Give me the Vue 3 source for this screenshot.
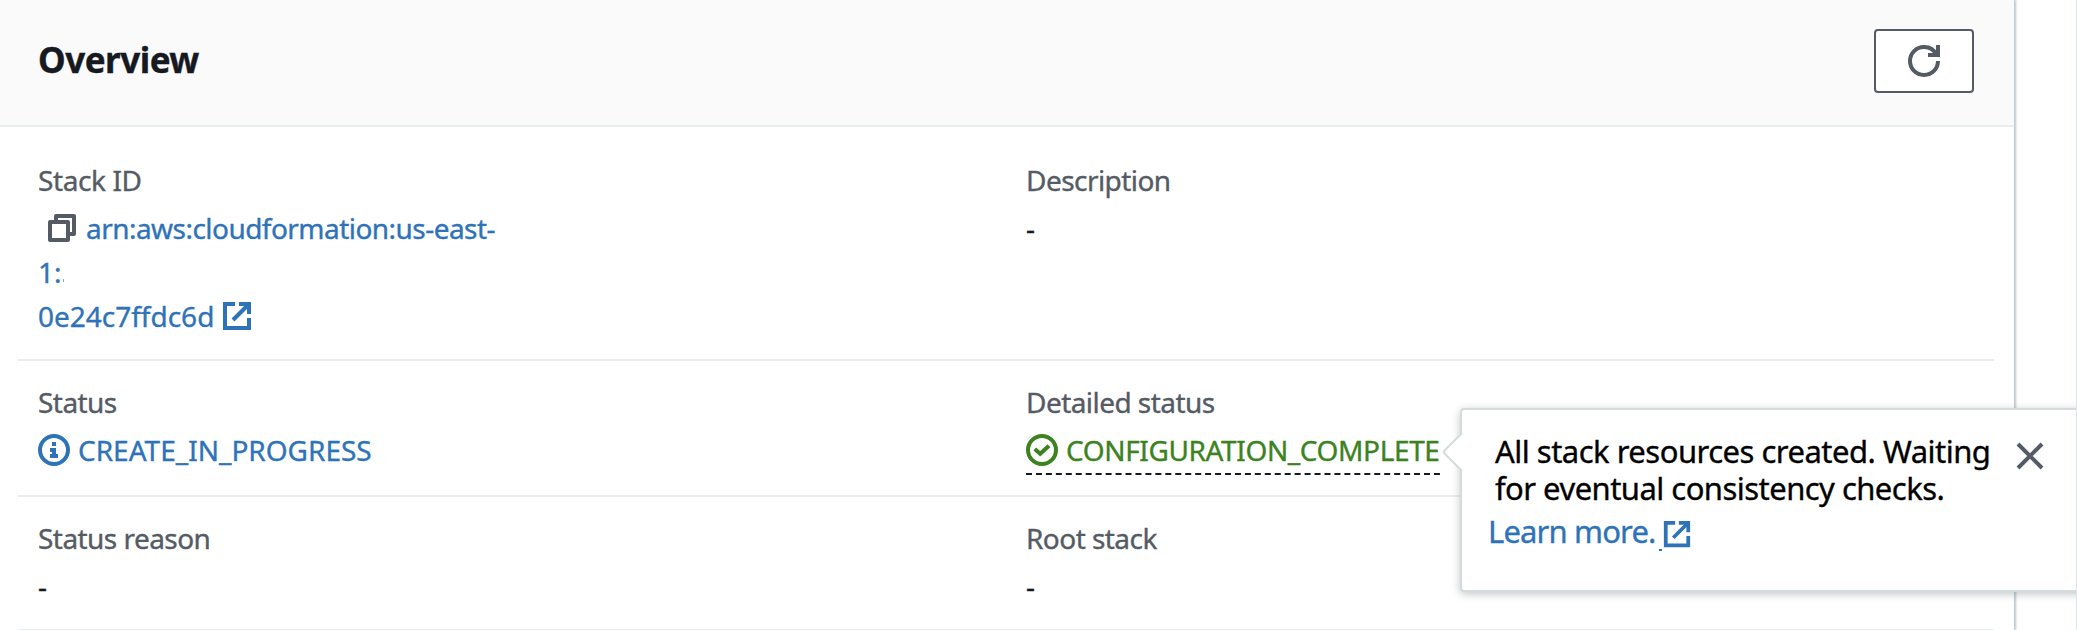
<template>
  <div class="page">
    <section class="panel">
      <header class="panel-header">
        <h2>Overview</h2>
        <button class="refresh" aria-label="Refresh">
          <svg class="icon" viewBox="0 0 16 16">
            <path d="M10 5h5V0" />
            <path d="M15 8a6.957 6.957 0 0 1-7 7 6.957 6.957 0 0 1-7-7 6.957 6.957 0 0 1 7-7 6.87 6.87 0 0 1 6.3 4" />
          </svg>
        </button>
      </header>

      <div class="row row-first">
        <div class="cell">
          <div class="label stack-id">Stack ID</div>
          <div class="link">
            <div class="line">
              <svg class="icon copy" viewBox="0 0 16 16">
                <path d="M2 5h9v9H2z" />
                <path d="M5 5V2h9v9h-3" />
              </svg>
              <span class="arn">arn:aws:cloudformation:us-east-</span>
            </div>
            <div class="line">1:<span class="cut"></span></div>
            <div class="line">
              <span class="hash">0e24c7ffdc6d</span>
              <svg class="icon external" viewBox="0 0 16 16">
                <path d="M9 2h5v5" />
                <path d="M6 10l8-8" />
                <path d="M14 9v5H2V2h5" />
              </svg>
            </div>
          </div>
        </div>
        <div class="cell">
          <div class="label">Description</div>
          <div class="value">-</div>
        </div>
      </div>

      <div class="row">
        <div class="cell">
          <div class="label">Status</div>
          <div class="status info">
            <svg class="icon" viewBox="0 0 16 16">
              <circle cx="8" cy="8" r="7" />
              <path d="M8 11V8H6" />
              <path d="M10 11H6" />
              <path d="M8 6V4" />
            </svg>
            <span class="in-progress">CREATE_IN_PROGRESS</span>
          </div>
        </div>
        <div class="cell">
          <div class="label">Detailed status</div>
          <div class="status success">
            <svg class="icon" viewBox="0 0 16 16">
              <circle cx="8" cy="8" r="7" />
              <path d="M4.4 7.5l2.7 2.4 4.4-4" />
            </svg>
            <span class="complete">CONFIGURATION_COMPLETE</span>
            <svg class="dashes" viewBox="0 0 414 2">
              <path d="M0 1h414" />
            </svg>
            <div class="popover">
              <svg class="arrow" viewBox="0 0 21 42">
                <path class="arrow-fill" d="M21 1L2 21l19 20z" />
                <path class="arrow-line" d="M20 2L3 19q-2 2 0 4l17 17" />
              </svg>
              <div class="message">
                <div class="first-line">All stack resources created. Waiting</div>
                <div class="second-line">for eventual consistency checks.</div>
                <a class="learn">
                  <span class="learn-text">Learn more.</span><span class="underline"></span>
                  <svg class="icon" viewBox="0 0 16 16">
                    <path d="M9 2h5v5" />
                    <path d="M6 10l8-8" />
                    <path d="M14 9v5H2V2h5" />
                  </svg>
                </a>
              </div>
              <svg class="icon close" viewBox="0 0 16 16">
                <path d="M2 2l12 12" />
                <path d="M14 2L2 14" />
              </svg>
            </div>
          </div>
        </div>
      </div>

      <div class="row row-last">
        <div class="cell">
          <div class="label">Status reason</div>
          <div class="value">-</div>
        </div>
        <div class="cell">
          <div class="label">Root stack</div>
          <div class="value">-</div>
        </div>
      </div>
    </section>
    <div class="gutter"></div>
  </div>
</template>

<script setup>
</script>

<style>
body {
  background: #fff;
  overflow: hidden;
}
</style>

<style scoped>
.page {
  display: flex;
  height: 630px;
  overflow: hidden;
  font-family: 'Noto Sans', 'Open Sans', sans-serif;
  font-size: 28px;
  line-height: 44px;
  color: #16191f;
  white-space: nowrap;
  -webkit-text-stroke: 0.35px currentColor;
}

.panel {
  box-sizing: border-box;
  width: 2015px;
  border-right: 1px solid #c4cbd0;
  box-shadow: 1px 0 2px rgba(0, 28, 36, 0.25);
}

.panel-header {
  box-sizing: border-box;
  display: flex;
  justify-content: space-between;
  align-items: flex-start;
  height: 127px;
  padding: 29px 40px 0 38px;
  background: #fafafa;
  border-bottom: 2px solid #eaeded;
}

.panel-header h2 {
  margin: 9px 0 0;
  font-size: 35px;
  font-weight: 700;
  letter-spacing: -0.5px;
}

.refresh {
  box-sizing: border-box;
  display: flex;
  align-items: center;
  justify-content: center;
  width: 100px;
  height: 64px;
  padding: 0;
  background: #fff;
  border: 2px solid #545b64;
  border-radius: 4px;
  color: #545b64;
}

.icon {
  flex: none;
  width: 32px;
  height: 32px;
  fill: none;
  stroke: currentColor;
  stroke-width: 2;
  overflow: visible;
}

.row {
  box-sizing: border-box;
  display: grid;
  grid-template-columns: 988px 1fr;
  height: 136px;
  margin: 0 20px 0 18px;
  padding: 19px 20px 0;
  border-bottom: 2px solid #eaeded;
}

.row-first {
  height: 234px;
  padding-top: 31px;
}

.row-last {
  height: 134px;
}

.label {
  margin-bottom: 4px;
  color: #545b64;
  letter-spacing: -0.55px;
}

.stack-id {
  letter-spacing: -0.4px;
}

.link {
  color: #2e73b8;
}

.line {
  display: flex;
  align-items: center;
  height: 44px;
}

.copy {
  margin: 0 8px 0 8px;
  color: #545b64;
  stroke-linejoin: round;
}

.arn {
  letter-spacing: -0.54px;
}

.cut {
  width: 1px;
  height: 3px;
  margin: 16px 0 0 1px;
  background: #7fa9d4;
}

.hash {
  letter-spacing: -0.01px;
}

.external {
  margin-left: 7px;
}

.status {
  display: flex;
  align-items: center;
  height: 44px;
}

.status .icon {
  margin-right: 8px;
}

.info {
  color: #2e73b8;
}

.success {
  position: relative;
  width: 414px;
  color: #3c8220;
}

.complete {
  letter-spacing: -0.38px;
}

.dashes {
  position: absolute;
  left: 0;
  top: 45px;
  width: 414px;
  height: 2px;
}

.dashes path {
  stroke: #16191f;
  stroke-width: 2;
  stroke-dasharray: 6 3.95;
}

/* the popover hangs off the status and runs past the right edge */
.popover {
  box-sizing: border-box;
  position: absolute;
  z-index: 2;
  left: 434px;
  top: -20px;
  display: flex;
  width: 660px;
  height: 184px;
  padding: 23px 0 0 33px;
  background: #fff;
  border: 2px solid #d5dbdb;
  border-radius: 4px;
  box-shadow: 0 2px 8px rgba(0, 28, 36, 0.25);
  color: #000;
  font-size: 31px;
  line-height: 37px;
}

.arrow {
  position: absolute;
  left: -20px;
  top: 21px;
  width: 21px;
  height: 42px;
  overflow: visible;
}

.arrow-fill {
  fill: #fff;
}

.arrow-line {
  fill: none;
  stroke: #d5dbdb;
  stroke-width: 2;
}

.message {
  width: 519px;
}

.first-line {
  letter-spacing: -0.51px;
}

.second-line {
  letter-spacing: -0.54px;
}

.learn {
  display: flex;
  align-items: center;
  height: 44px;
  margin: 2px 0 0 -7px;
  color: #2e73b8;
}

.learn-text {
  letter-spacing: -0.85px;
}

.underline {
  align-self: flex-end;
  width: 3px;
  height: 2px;
  margin: 0 0 2px 3px;
  background: #2e73b8;
}

.learn .icon {
  width: 30px;
  height: 30px;
  margin: 5px 0 0 0;
}

.popover .close {
  margin: 7px 0 0;
  color: #545b64;
}

.gutter {
  position: relative;
  z-index: 3;
  flex: 1;
  border-right: 1px solid #dfe3e4;
  pointer-events: none;
}
</style>
